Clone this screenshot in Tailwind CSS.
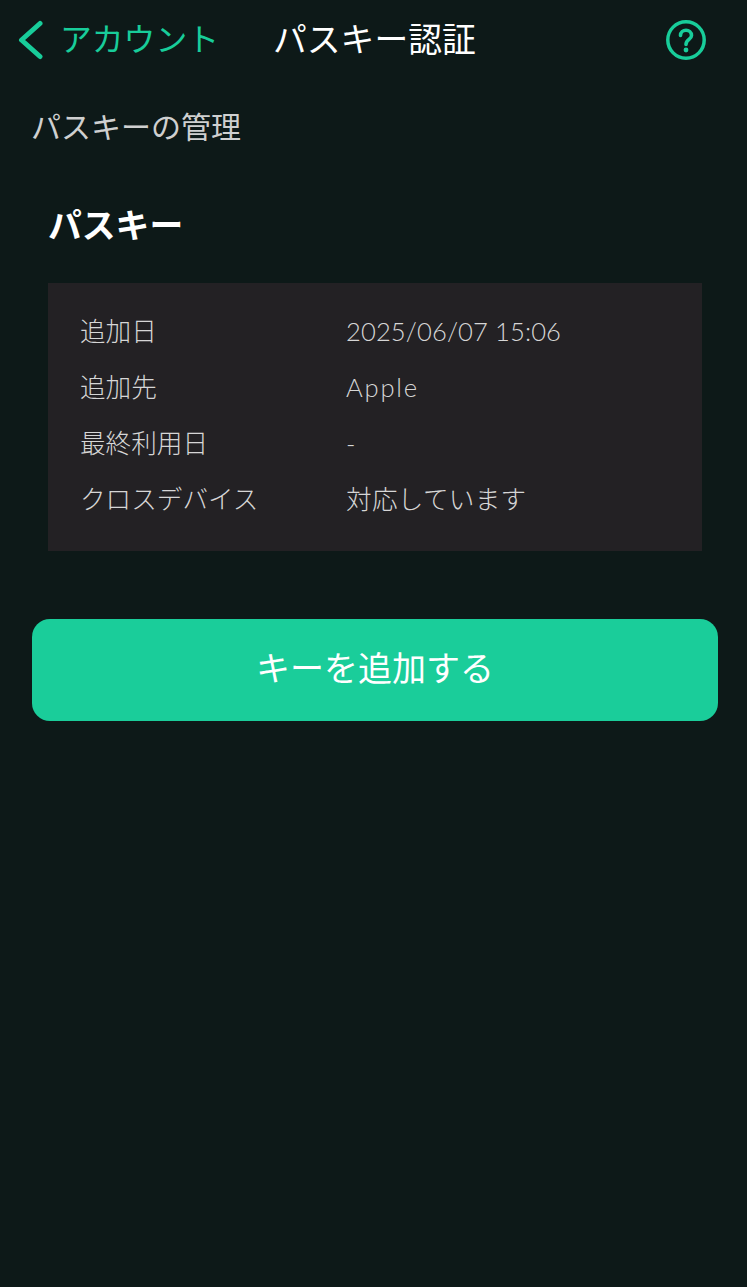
<!DOCTYPE html>
<html lang="ja">
<head>
  <meta charset="UTF-8" />
  <title>パスキー認証</title>
  <script src="https://cdn.jsdelivr.net/npm/@tailwindcss/browser@4"></script>
</head>
<body class="bg-[#0d1918] font-['Lato','Noto_Sans_CJK_JP',sans-serif]">
  <div class="w-[747px] h-[1287px] overflow-hidden">

    <!-- ヘッダー -->
    <header class="h-[79px] flex items-center">
      <svg class="ml-[17px] w-[28px] h-[40px]" viewBox="0 0 28 40" fill="none" stroke="#18cd9a" stroke-width="5" stroke-linecap="round" stroke-linejoin="round">
        <path d="M23 3.5 L4.5 20 L23 36.5" />
      </svg>
      <span class="ml-[15px] w-[215px] text-[31.8px] leading-none text-[#18cd9a]">アカウント</span>
      <h1 class="-ml-[2px] text-[33.8px] leading-none text-white">パスキー認証</h1>
      <svg class="ml-auto mr-[40px] w-[42px] h-[42px]" viewBox="0 0 42 42" fill="none" stroke="#18cd9a" stroke-width="3.5">
        <circle cx="21" cy="21" r="18.2" />
        <path d="M15.5 16.5 C15.5 9.5 26.5 9.5 26.5 16.5 C26.5 20.5 21 20.5 21 25.5" stroke-width="3.6" stroke-linecap="round" />
        <circle cx="21" cy="31" r="2.4" fill="#18cd9a" stroke="none" />
      </svg>
    </header>

    <p class="mt-[29px] ml-[31px] text-[30px] leading-[36px] font-normal text-[#cfd0d0]">パスキーの管理</p>

    <h2 class="mt-[61px] ml-[48px] text-[33.8px] leading-[40px] font-semibold text-white">パスキー</h2>

    <!-- キー情報 -->
    <div class="mt-[38px] ml-[48px] w-[654px] h-[268px] bg-[#232124] pt-[20px] pl-[32px] text-[25.6px] font-light leading-[56px] text-[#d6d6d6]">
      <div class="flex"><span class="w-[266px]">追加日</span><span class="tracking-[0.1px]">2025/06/07 15:06</span></div>
      <div class="flex"><span class="w-[266px]">追加先</span><span class="tracking-[1.8px]">Apple</span></div>
      <div class="flex"><span class="w-[266px]">最終利用日</span><span>-</span></div>
      <div class="flex"><span class="w-[266px]">クロスデバイス</span><span class="tracking-[0.3px]">対応しています</span></div>
    </div>

    <button class="mt-[68px] ml-[32px] w-[686px] h-[102px] rounded-[18px] bg-[#1acd9a] pb-[5px] text-[34px] font-normal text-white">キーを追加する</button>
  </div>
</body>
</html>
